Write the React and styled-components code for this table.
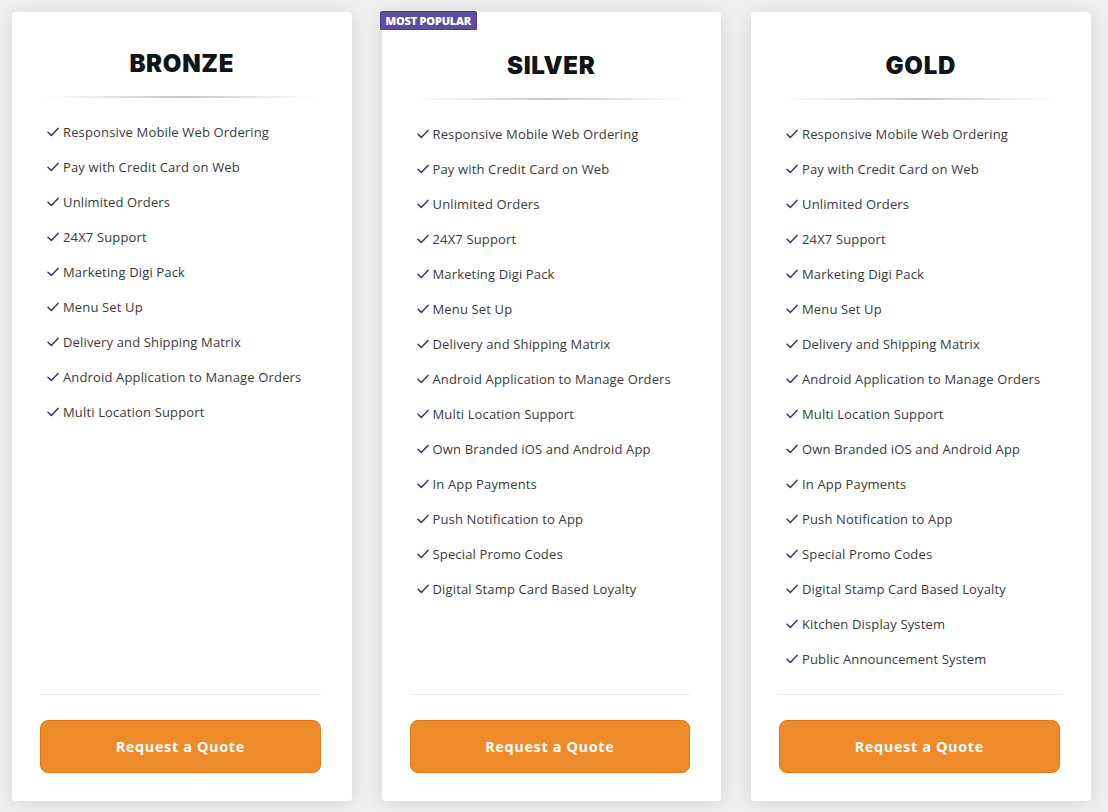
import React from "react";
import styled, { createGlobalStyle } from "styled-components";

const Global = createGlobalStyle`
  html, body { margin: 0; padding: 0; }
  body {
    background: #f0f0f0;
    font-family: "Open Sans", "Liberation Sans", sans-serif;
  }
`;

const Page = styled.div`
  display: grid;
  grid-template-columns: repeat(3, 339.5px);
  column-gap: 30px;
  padding: 12px 12px 11px 12px;
  align-items: stretch;
`;

const Card = styled.div`
  position: relative;
  background: #fff;
  border-radius: 4px;
  box-shadow: 0 2px 22px rgba(0, 0, 0, 0.12);
  display: flex;
  flex-direction: column;
  padding: ${(p) => (p.$raised ? "38px" : "36px")} 0 28px;
`;

const Badge = styled.div`
  position: absolute;
  top: -1px;
  left: -2px;
  height: 19px;
  padding: 0 5px;
  display: flex;
  align-items: center;
  background: #5c4d9f;
  border: 1px solid #4b3f8b;
  border-radius: 2px 2px 0 0;
  box-sizing: border-box;
  color: #fff;
  font-family: "Open Sans", sans-serif;
  font-weight: 800;
  font-size: 11px;
  letter-spacing: -0.2px;
`;

const Title = styled.h2`
  margin: 0;
  text-align: center;
  font-family: Inter, "Liberation Sans", sans-serif;
  font-weight: 900;
  font-size: 24px;
  line-height: 32px;
  letter-spacing: 0.7px;
  color: #111418;
`;

const TitleRule = styled.div`
  height: 2px;
  margin: 16px 36px 0 33px;
  background: linear-gradient(
    to right,
    rgba(200, 200, 200, 0),
    #c6c6c6 50%,
    rgba(200, 200, 200, 0)
  );
`;

const Features = styled.ul`
  list-style: none;
  margin: 16px 0 0;
  padding: 0 0 0 35px;
  flex: 1;
`;

const Feature = styled.li`
  height: 35px;
  display: flex;
  align-items: center;
  gap: 4px;
  font-size: 13px;
  color: #3a3a3a;
  letter-spacing: 0.15px;
`;

const Check = styled.svg`
  width: 12px;
  height: 10px;
  flex: none;
  margin-top: 1px;
`;

const Footer = styled.div`
  margin: 18px 31px 0 28px;
  padding-top: 25px;
  border-top: 1px solid #ececec;
`;

const QuoteButton = styled.button`
  width: 100%;
  height: 53px;
  background: #ef8a2a;
  border: 1px solid #dd7a16;
  border-radius: 8px;
  color: #fff;
  font-family: "Open Sans", sans-serif;
  font-weight: 700;
  font-size: 14.5px;
  letter-spacing: 0.6px;
  cursor: pointer;
`;

const base = [
  "Responsive Mobile Web Ordering",
  "Pay with Credit Card on Web",
  "Unlimited Orders",
  "24X7 Support",
  "Marketing Digi Pack",
  "Menu Set Up",
  "Delivery and Shipping Matrix",
  "Android Application to Manage Orders",
  "Multi Location Support",
];
const silver = [
  ...base,
  "Own Branded iOS and Android App",
  "In App Payments",
  "Push Notification to App",
  "Special Promo Codes",
  "Digital Stamp Card Based Loyalty",
];
const gold = [...silver, "Kitchen Display System", "Public Announcement System"];

const plans = [
  { name: "BRONZE", items: base, raised: false },
  { name: "SILVER", items: silver, raised: true, badge: "MOST POPULAR" },
  { name: "GOLD", items: gold, raised: true },
];

const CheckIcon = () => (
  <Check viewBox="0 0 12 10">
    <path
      d="M1 5.2 L4.3 8.4 L11 1.4"
      fill="none"
      stroke="#3b3372"
      strokeWidth="1.5"
      strokeLinecap="round"
      strokeLinejoin="round"
    />
  </Check>
);

export default function App() {
  return (
    <>
      <Global />
      <Page>
        {plans.map((p) => (
          <Card key={p.name} $raised={p.raised}>
            {p.badge && <Badge>{p.badge}</Badge>}
            <Title>{p.name}</Title>
            <TitleRule />
            <Features>
              {p.items.map((it) => (
                <Feature key={it}>
                  <CheckIcon />
                  <span>{it}</span>
                </Feature>
              ))}
            </Features>
            <Footer>
              <QuoteButton>Request a Quote</QuoteButton>
            </Footer>
          </Card>
        ))}
      </Page>
    </>
  );
}
